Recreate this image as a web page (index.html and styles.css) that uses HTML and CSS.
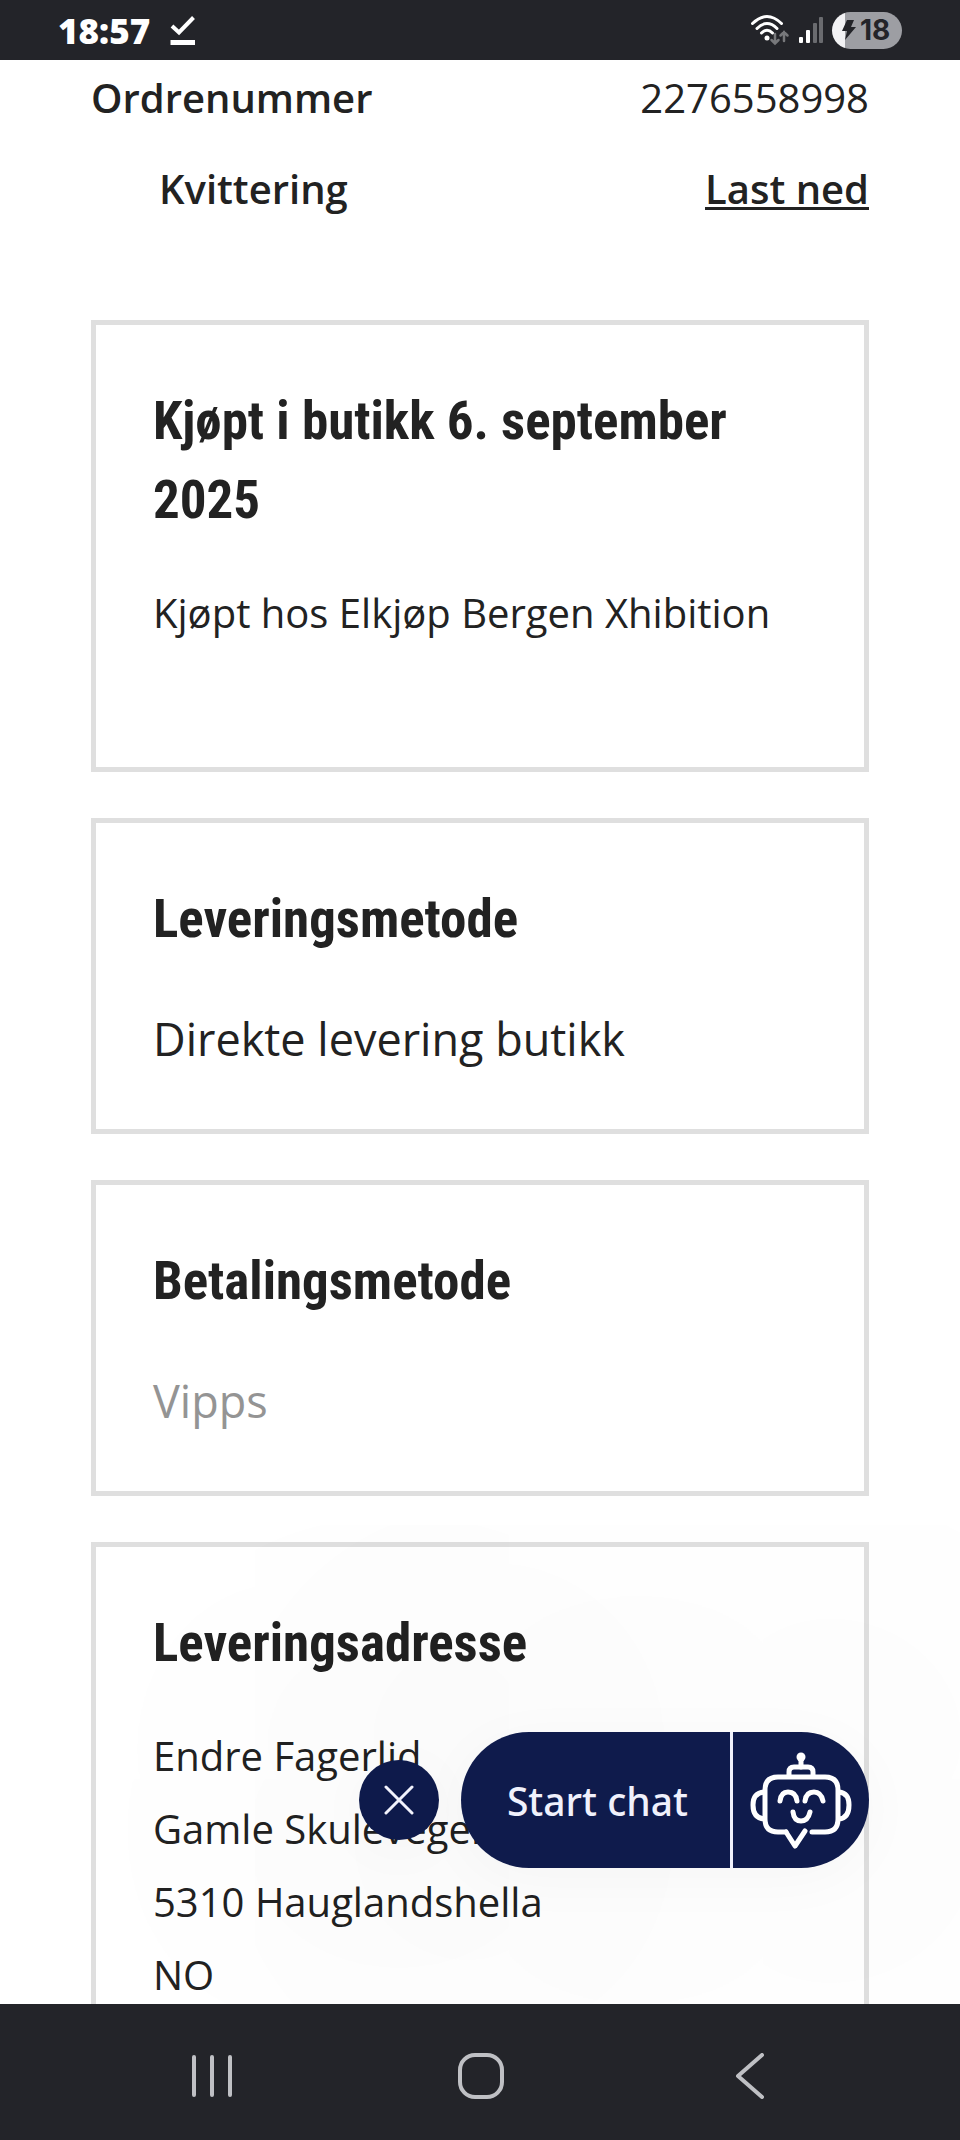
FILE: index.html
```html
<!DOCTYPE html>
<html lang="no">
<head>
    <meta charset="UTF-8">
    <meta name="viewport" content="width=device-width, initial-scale=1.0">
    <title>Ordre 2276558998</title>
    <link rel="stylesheet" href="styles.css">
</head>
<body>
    <!-- Status bar -->
    <header class="status-bar">
        <div class="status-left">
            <span class="clock">18:57</span>
            <svg class="icon-done" width="26" height="30" viewBox="0 0 26 30" fill="none" stroke="#fff">
                <path d="M2 11 L9 17.500 L23.500 2.500" stroke-width="4"/>
                <path d="M0.500 27.500 H25" stroke-width="5"/>
            </svg>
        </div>
        <div class="status-right">
            <svg width="40" height="32" viewBox="0 0 40 32" fill="none" stroke-linecap="round">
                <g stroke="#fff" stroke-width="3">
                    <path d="M2.500 9.500 Q17 -4.500 31.500 9.500"/>
                    <path d="M7 14.500 Q17 4.500 27 14.500"/>
                    <path d="M11.500 19 Q17 13.500 22.500 19"/>
                </g>
                <circle cx="17" cy="24" r="2.500" fill="#fff"/>
                <g stroke="#77787b" stroke-width="2.500">
                    <path d="M25 20 V29 M21.500 26 L25 29.500 L28.500 26"/>
                    <path d="M34 27 V18 M30.500 21.500 L34 18 L37.500 21.500"/>
                </g>
            </svg>
            <svg width="26" height="28" viewBox="0 0 26 28">
                <rect x="1" y="21" width="4" height="6" rx="1" fill="#fff"/>
                <rect x="8" y="14" width="4" height="13" rx="1" fill="#fff"/>
                <rect x="15" y="7" width="4" height="20" rx="1" fill="#6a6b6f"/>
                <rect x="21" y="1" width="4" height="26" rx="1" fill="#6a6b6f"/>
            </svg>
            <div class="battery">
                <svg width="14" height="20" viewBox="0 0 14 20" fill="#232429">
                    <path d="M5 0 H12 L9 7 H14 L3 20 L5 11 H0 Z"/>
                </svg>
                <span>18</span>
            </div>
        </div>
    </header>

    <main class="page">
        <dl class="order-info">
            <div class="order-row">
                <dt>Ordrenummer</dt>
                <dd>2276558998</dd>
            </div>
            <div class="order-row receipt">
                <dt>Kvittering</dt>
                <dd><a href="#">Last ned</a></dd>
            </div>
        </dl>

        <section class="card store">
            <h2>Kjøpt i butikk 6. september 2025</h2>
            <p>Kjøpt hos Elkjøp Bergen Xhibition</p>
        </section>

        <section class="card">
            <h2>Leveringsmetode</h2>
            <p class="large">Direkte levering butikk</p>
        </section>

        <section class="card">
            <h2>Betalingsmetode</h2>
            <p class="large muted">Vipps</p>
        </section>

        <section class="card">
            <h2>Leveringsadresse</h2>
            <address>
                Endre Fagerlid<br>
                Gamle Skulevegen<br>
                5310 Hauglandshella<br>
                NO
            </address>
        </section>

        <!-- Chat launcher -->
        <div class="chat">
            <button class="chat-close" type="button" aria-label="Lukk">
                <svg width="30" height="30" viewBox="0 0 30 30" fill="none" stroke="#f4f5ff" stroke-width="3" stroke-linecap="round">
                    <path d="M2 2 L28 28 M28 2 L2 28"/>
                </svg>
            </button>
            <button class="chat-start" type="button">
                <span class="chat-label">Start chat</span>
                <span class="chat-bot">
                    <svg width="102" height="98" viewBox="0 0 102 98" fill="none" stroke="#fff" stroke-width="5" stroke-linecap="round" stroke-linejoin="round">
                        <circle cx="51" cy="6" r="4.500" fill="#fff" stroke="none"/>
                        <path d="M51 8 V16"/>
                        <path d="M39 25 V21 Q39 16 44 16 H58 Q63 16 63 21 V25"/>
                        <path d="M36 81 H28 Q15 81 15 68 V39 Q15 26 28 26 H75 Q88 26 88 39 V68 Q88 81 75 81 H62"/>
                        <path d="M36 81 L45 95 L55 80"/>
                        <path d="M14 41 Q3 42 3 54 Q3 67 14 68"/>
                        <path d="M89 41 Q99 42 99 54 Q99 67 89 68"/>
                        <path d="M30 50 Q31 41 38 41 Q46 41 47 50"/>
                        <path d="M55 50 Q56 41 64 41 Q71 41 73 50"/>
                        <path d="M43 61 Q44 70 51 70 Q58 70 60 61"/>
                    </svg>
                </span>
            </button>
        </div>
    </main>

    <!-- Navigation bar -->
    <nav class="nav-bar">
        <button type="button" aria-label="Nylige apper">
            <svg width="42" height="46" viewBox="0 0 42 46" fill="none" stroke="#bfc0c4" stroke-width="4" stroke-linecap="round">
                <path d="M3 4 V42 M21 4 V42 M39 4 V42"/>
            </svg>
        </button>
        <button type="button" aria-label="Hjem">
            <svg width="46" height="46" viewBox="0 0 46 46" fill="none" stroke="#bfc0c4" stroke-width="4">
                <rect x="2" y="2" width="42" height="42" rx="15"/>
            </svg>
        </button>
        <button type="button" aria-label="Tilbake">
            <svg width="30" height="46" viewBox="0 0 30 46" fill="none" stroke="#bfc0c4" stroke-width="4" stroke-linecap="round" stroke-linejoin="round">
                <path d="M27 2 L3 23 L27 44"/>
            </svg>
        </button>
    </nav>
</body>
</html>
```
FILE: styles.css
```css
* {
    box-sizing: border-box;
}

body {
    margin: 0;
    height: 100vh;
    display: flex;
    flex-direction: column;
    overflow: hidden;
    background-color: #fff;
    color: #222;
    font-family: "Open Sans", sans-serif;
    font-size: 40px;
}

button {
    border: none;
    padding: 0;
    background: none;
    font: inherit;
    cursor: pointer;
}

svg {
    display: block;
    flex: none;
}

/* Status bar */
.status-bar {
    flex: none;
    display: flex;
    justify-content: space-between;
    align-items: center;
    height: 60px;
    padding: 0 58px;
    background-color: #232429;
    color: #fff;
}

.status-left,
.status-right {
    display: flex;
    align-items: center;
}

.status-left {
    gap: 20px;
}

.status-right {
    gap: 8px;
}

.clock {
    font-size: 35px;
    font-weight: 800;
}

.battery {
    display: flex;
    align-items: center;
    gap: 4px;
    height: 37px;
    width: 70px;
    padding-left: 10px;
    border-radius: 19px;
    background: linear-gradient(to right, #f2f2f4 13px, #9d9ea3 13px);
    color: #232429;
    font-family: Inter, sans-serif;
    font-size: 28px;
    font-weight: 700;
}

/* Order page */
.page {
    position: relative;
    flex: 1;
    min-height: 0;
    overflow: hidden;
    padding: 8px 91px 0;
}

.order-info {
    display: flex;
    flex-direction: column;
    gap: 31px;
    margin: 0 0 101px;
    line-height: 60px;
}

.order-row {
    display: flex;
    justify-content: space-between;
}

.order-row dt {
    font-weight: 600;
}

.order-row dd {
    margin: 0;
}

.receipt {
    padding-left: 68px;
}

.receipt a {
    color: inherit;
    font-weight: 600;
    text-decoration-thickness: 3px;
    text-underline-offset: 3px;
}

.card {
    margin-bottom: 46px;
    padding: 57px 57px 46px;
    border: 5px solid #dfdfdf;
}

.card.store {
    padding-bottom: 118px;
}

.card h2 {
    margin: 0 0 36px;
    font-family: "Roboto Condensed", Roboto, sans-serif;
    font-size: 53px;
    font-weight: 700;
    line-height: 79px;
}

.card p,
.card address {
    margin: 0;
    font-style: normal;
    line-height: 73px;
}

.card .large {
    font-size: 45px;
    line-height: 88px;
}

.muted {
    color: #949494;
}

/* Chat launcher */
.chat {
    position: absolute;
    right: 91px;
    bottom: 136px;
    display: flex;
    align-items: center;
    gap: 22px;
}

.chat button {
    background-color: #0f1b4c;
    color: #f0f1fc;
    box-shadow: 0 10px 60px rgba(0, 0, 0, 0.03), 0 0 500px 200px rgba(0, 0, 0, 0.01);
}

.chat-close {
    display: flex;
    align-items: center;
    justify-content: center;
    width: 80px;
    height: 80px;
    border-radius: 50%;
}

.chat-start {
    display: flex;
    height: 136px;
    border-radius: 68px;
    overflow: hidden;
}

.chat-label {
    display: flex;
    align-items: center;
    padding: 0 42px 0 46px;
    font-family: "Noto Sans", sans-serif;
    font-size: 39px;
    font-weight: 500;
}

.chat-bot {
    display: flex;
    align-items: center;
    padding: 0 17px 0 17px;
    border-left: 3px solid #f0f1fc;
}

/* Navigation bar */
.nav-bar {
    flex: none;
    display: flex;
    align-items: center;
    height: 136px;
    padding: 8px 76px 0 78px;
    background-color: #232429;
}

.nav-bar button {
    flex: 1;
    display: flex;
    justify-content: center;
}
```
